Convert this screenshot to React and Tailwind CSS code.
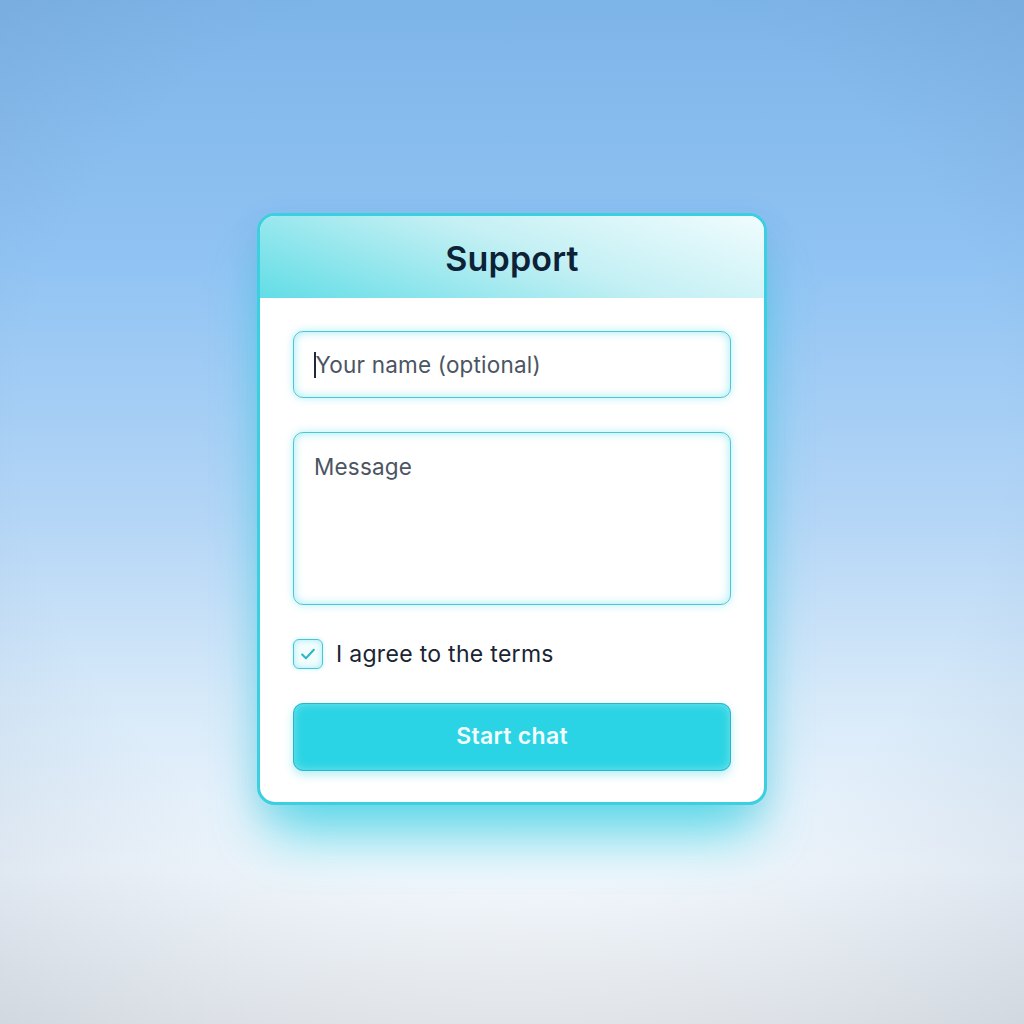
import React, { useState } from 'react';

const App = () => {
  const [agree, setAgree] = useState(true);

  return (
    <div
      className="w-full h-[1024px] flex justify-center pt-[213px] bg-[radial-gradient(ellipse_80%_75%_at_50%_42%,rgba(255,255,255,0)_60%,rgba(90,115,150,0.18)_100%),linear-gradient(180deg,#7db4e8_0%,#90c3f3_25%,#b3d5f6_50%,#d6e9f9_68%,#f0f6fc_85%,#eceef0_100%)]"
      style={{ fontFamily: 'Inter, "Noto Sans", sans-serif' }}
    >
      <div className="w-[510px] h-[592px] rounded-[18px] border-[3px] border-[#3ccfe0] bg-white overflow-hidden flex flex-col shadow-[0_40px_55px_-12px_rgba(40,212,228,0.7),0_10px_30px_rgba(40,120,180,0.15)]">
        <div className="h-[82px] shrink-0 flex items-center justify-center bg-[linear-gradient(200deg,#f0fcfe_0%,#c4f0f4_45%,#62dde6_100%)]">
          <h1 className="text-[34px] font-semibold text-[#0d2236] tracking-[0.2px] pt-[3px]">Support</h1>
        </div>
        <div className="flex flex-col px-[33px] pt-[33px]">
          <div className="h-[67px] rounded-[10px] border-[1.5px] border-[#4cc6d4] bg-white flex items-center pl-[20px] shadow-[inset_0_0_10px_rgba(40,210,228,0.45),0_0_8px_rgba(40,210,228,0.35)]">
            <span className="w-[1.5px] h-[26px] bg-[#1f2937]"></span>
            <input
              className="flex-1 bg-transparent outline-none text-[22.5px] tracking-[0.2px] text-[#374151] placeholder:text-[#4b5563]"
              placeholder="Your name (optional)"
            />
          </div>
          <div className="mt-[34px] h-[173px] rounded-[10px] border-[1.5px] border-[#4cc6d4] bg-white px-[20px] pt-[17px] shadow-[inset_0_0_10px_rgba(40,210,228,0.45),0_0_8px_rgba(40,210,228,0.35)]">
            <textarea
              className="w-full h-full resize-none bg-transparent outline-none text-[22.5px] tracking-[0.2px] text-[#374151] placeholder:text-[#4b5563]"
              placeholder="Message"
            />
          </div>
          <label className="mt-[32px] flex items-center gap-[13px] cursor-pointer" onClick={() => setAgree(a => !a)}>
            <span className="w-[30px] h-[30px] rounded-[6px] border-[1.5px] border-[#4cc6d4] bg-[#f3fdfe] flex items-center justify-center shadow-[inset_0_0_6px_rgba(40,210,228,0.4),0_0_4px_rgba(40,210,228,0.3)]">
              {agree && (
                <svg width="20" height="20" viewBox="0 0 24 24" fill="none" stroke="#2ab8c8" strokeWidth="2.5" strokeLinecap="round" strokeLinejoin="round">
                  <path d="M5 12.5l4.5 4.5L19 7" />
                </svg>
              )}
            </span>
            <span className="text-[23px] tracking-[0.3px] text-[#1a2433]">I agree to the terms</span>
          </label>
          <button
            type="button"
            className="mt-[31px] h-[68px] rounded-[10px] border-[1.5px] border-[#2bb5c6] bg-[#2bd4e4] text-[#f2fdff] text-[23px] font-semibold tracking-[0.3px] shadow-[inset_0_0_10px_rgba(255,255,255,0.35),0_4px_10px_rgba(40,210,228,0.35)]"
          >
            Start chat
          </button>
        </div>
      </div>
    </div>
  );
};

export default App;
